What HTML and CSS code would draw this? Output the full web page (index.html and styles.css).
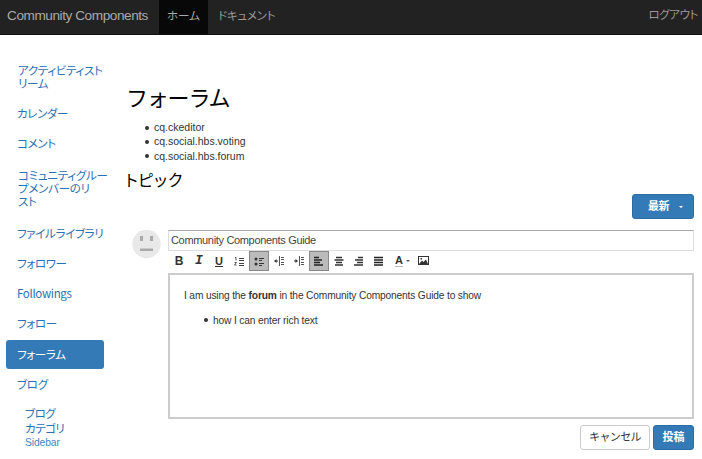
FILE: index.html
```html
<!DOCTYPE html>
<html lang="ja">
<head>
<meta charset="utf-8">
<title>Community Components</title>
<link rel="stylesheet" href="styles.css">
</head>
<body>
<header class="navbar">
  <a class="brand">Community Components</a>
  <a class="tab current">ホーム</a>
  <a class="tab docs">ドキュメント</a>
  <a class="logout">ログアウト</a>
</header>
<div class="page">
  <nav class="sidebar">
    <a class="item two">アクティビティスト<br>リーム</a>
    <a class="item">カレンダー</a>
    <a class="item">コメント</a>
    <a class="item three">コミュニティグルー<br>プメンバーのリ<br>スト</a>
    <a class="item">ファイルライブラリ</a>
    <a class="item">フォロワー</a>
    <a class="item">Followings</a>
    <a class="item">フォロー</a>
    <a class="item active">フォーラム</a>
    <a class="item">ブログ</a>
    <div class="sub"><a>ブログ</a><a>カテゴリ</a><a class="small">Sidebar</a></div>
  </nav>
  <main class="content">
    <h1>フォーラム</h1>
    <ul class="deps">
      <li>cq.ckeditor</li>
      <li>cq.social.hbs.voting</li>
      <li>cq.social.hbs.forum</li>
    </ul>
    <h2>トピック</h2>
    <div class="sort"><button class="btn primary latest">最新<i class="caret"></i></button></div>
    <div class="composer">
      <svg class="avatar" viewBox="0 0 29 29"><circle cx="14.5" cy="14" r="14.2" fill="#e8e8e8"/><path d="M8 6h3v5H8zM18 6h3v5h-3zM8 18.500h13v2.500H8z" fill="#aaa"/></svg>
      <div class="editor">
        <div class="subject">Community Components Guide</div>
        <div class="toolbar">
          <span class="tool b">B</span>
          <span class="tool i">I</span>
          <span class="tool u">U</span>
          <span class="tool"><svg viewBox="0 0 20 20"><path d="M10 7.500h5M10 9.500h5M10 12.500h5M10 14.500h5" stroke="#444"/><path d="M6 6.500h1v3M5.500 11.500h2l-2 2.500h2" stroke="#444" fill="none" stroke-width=".9"/></svg></span>
          <span class="tool on"><svg viewBox="0 0 20 20"><circle cx="7" cy="8" r="1.500"/><circle cx="7" cy="13" r="1.500"/><path d="M10 7.500h5M10 9.500h3M10 12.500h5M10 14.500h3" stroke="#333"/></svg></span>
          <span class="tool"><svg viewBox="0 0 20 20"><path d="M10.500 5v10M12 6.500h3M12 8.500h3M12 11.500h3M12 13.500h3" stroke="#555"/><path d="M9 10H6" stroke="#333"/><path d="M5 10l2.500-2v4z"/></svg></span>
          <span class="tool"><svg viewBox="0 0 20 20"><path d="M10.500 5v10M12 6.500h3M12 8.500h3M12 11.500h3M12 13.500h3" stroke="#555"/><path d="M5 10h3" stroke="#333"/><path d="M9 10L6.500 8v4z"/></svg></span>
          <span class="tool on"><svg viewBox="0 0 20 20"><path d="M5 6.500h5M5 9h8M5 11.500h6M5 14h9" stroke="#222" stroke-width="1.500"/></svg></span>
          <span class="tool"><svg viewBox="0 0 20 20"><path d="M7 6.500h6M5.500 9h9M7 11.500h6M6 14h8" stroke="#333" stroke-width="1.500"/></svg></span>
          <span class="tool"><svg viewBox="0 0 20 20"><path d="M9 6.500h5M6 9h8M8 11.500h6M5 14h9" stroke="#333" stroke-width="1.500"/></svg></span>
          <span class="tool"><svg viewBox="0 0 20 20"><path d="M5 6.500h9M5 9h9M5 11.500h9M5 14h9" stroke="#222" stroke-width="1.700"/></svg></span>
          <span class="tool color"><b>A</b><i class="caret dark"></i></span>
          <span class="tool"><svg viewBox="0 0 20 20"><rect x="4.500" y="5.500" width="10" height="8" fill="none" stroke="#333"/><path d="M5 13l3-3.500 1.500 1.500 2.500-2.500L14 13z"/><path d="M6.500 7H8v1.500H6.500z"/></svg></span>
        </div>
        <div class="body">
          <p>I am using the <b>forum</b> in the Community Components Guide to show</p>
          <ul><li>how I can enter rich text</li></ul>
        </div>
        <div class="actions"><button class="btn cancel">キャンセル</button><button class="btn primary post">投稿</button></div>
      </div>
    </div>
  </main>
</div>
</body>
</html>
```
FILE: styles.css
```css
* { box-sizing: border-box; }
body {
  margin: 0; height: 459px; overflow: hidden; background: #fff; color: #333;
  font-family: "Liberation Sans", "Noto Sans CJK JP", sans-serif; font-size: 10.5px;
}
a, h1, h2, button { font-feature-settings: "palt"; white-space: nowrap; }
.navbar { display: flex; height: 35px; background: #222; border-bottom: 1px solid #101010; color: #999; }
.brand { width: 159px; padding-left: 7px; font-size: 13.6px; line-height: 32px; letter-spacing: -.43px; color: #aaa; }
.tab { height: 34px; font-size: 11.5px; line-height: 32px; color: #999; }
.current { width: 49px; padding-left: 8px; background: #080808; color: #aaa; }
.docs { padding-left: 10px; letter-spacing: -.25px; }
.logout { margin-left: auto; padding-right: 4px; font-size: 11.5px; line-height: 31px; letter-spacing: -.4px; }
.page { display: flex; }
.sidebar { width: 104px; padding: 20px 0 0 6px; font-family: "Noto Sans CJK JP", sans-serif; color: #2a70b2; }
.item { display: flex; align-items: center; height: 30px; width: 98px; padding-left: 11px; font-size: 11.5px; line-height: 13px; letter-spacing: -.33px; }
.two { height: 43px; padding-left: 12px; }
.three { height: 60px; padding-left: 12px; letter-spacing: -.25px; }
.active { height: 29px; margin: 2px 0 0; padding-bottom: 1px; border-radius: 3px; background: #337ab7; color: #fff; }
.sub { padding: 7px 0 0 19px; font-size: 11.5px; line-height: 15px; letter-spacing: -.5px; }
.sub a { display: block; }
.sub .small { font: 10.3px/14px "Liberation Sans", sans-serif; letter-spacing: -.1px; color: #4285bd; }
.content { flex: 1; padding: 0 8px 0 19px; }
h1 { margin: 46px 0 0 3px; font: 22px/31px "Noto Sans CJK JP", sans-serif; letter-spacing: -1.2px; color: #000; }
.deps { margin: 8px 0 0; padding: 0 0 0 31px; line-height: 14.3px; list-style: none; }
.deps li::before, .body li::before { content: ""; display: inline-block; width: 4px; height: 4px; margin: 0 5px 1.5px -9px; border-radius: 50%; background: #333; }
h2 { margin: 5px 0 0; font: 16px/22px "Noto Sans CJK JP", sans-serif; letter-spacing: -1.2px; color: #000; }
.sort { display: flex; justify-content: flex-end; margin-top: 4px; }
.btn { display: flex; align-items: center; justify-content: center; padding: 0; height: 25px; border: 1px solid #ccc; border-radius: 3px; background: #fff; font: 11px/13px "Noto Sans CJK JP", sans-serif; color: #333; }
.primary { background: #337ab7; border-color: #2e6da4; color: #fff; font-weight: 700; }
.latest { width: 62px; gap: 10px; padding: 0 0 1px 5px; letter-spacing: -.4px; }
.caret { margin-top: 2px; border: 2.5px solid transparent; border-top-color: #fff; border-bottom: 0; }
.dark { margin: 0; border-width: 2px; border-top-color: #555; border-bottom: 0; }
.composer { display: flex; margin: 11px 0 0 9px; }
.avatar { width: 29px; height: 29px; margin-right: 7px; }
.editor { flex: 1; }
.subject { height: 21px; padding-left: 2px; border: 1px solid #ddd; border-top-color: #aaa; font-size: 11px; line-height: 19px; letter-spacing: -.33px; color: #444; }
.toolbar { display: flex; height: 22px; padding-left: 1px; }
.tool { width: 20px; height: 20px; text-align: center; line-height: 20px; color: #333; font-size: 12px; }
.tool svg { display: block; width: 20px; height: 20px; fill: #333; }
.b { font-weight: 700; }
.i { font: italic 700 13px/20px "Liberation Mono", monospace; }
.u { font-weight: 700; font-size: 11px; text-decoration: underline; }
.on { background: #bbb; box-shadow: inset 0 0 0 1px #888; }
.color { display: flex; align-items: center; width: 25px; padding-left: 6px; gap: 3px; }
.color b { font-size: 11px; line-height: 11px; border-bottom: 1px solid #bbb; }
.body { height: 146px; padding: 14px 14px; border: 2px solid #ccc; font-size: 10.2px; line-height: 13px; letter-spacing: -.15px; }
.body p { margin: 0 0 12px; }
.body ul { margin: 0; padding-left: 29px; list-style: none; }
.actions { display: flex; justify-content: flex-end; gap: 3px; margin-top: 6px; }
.cancel { width: 70px; padding-bottom: 2px; letter-spacing: -.6px; }
.post { width: 41px; padding-bottom: 2px; }
```
